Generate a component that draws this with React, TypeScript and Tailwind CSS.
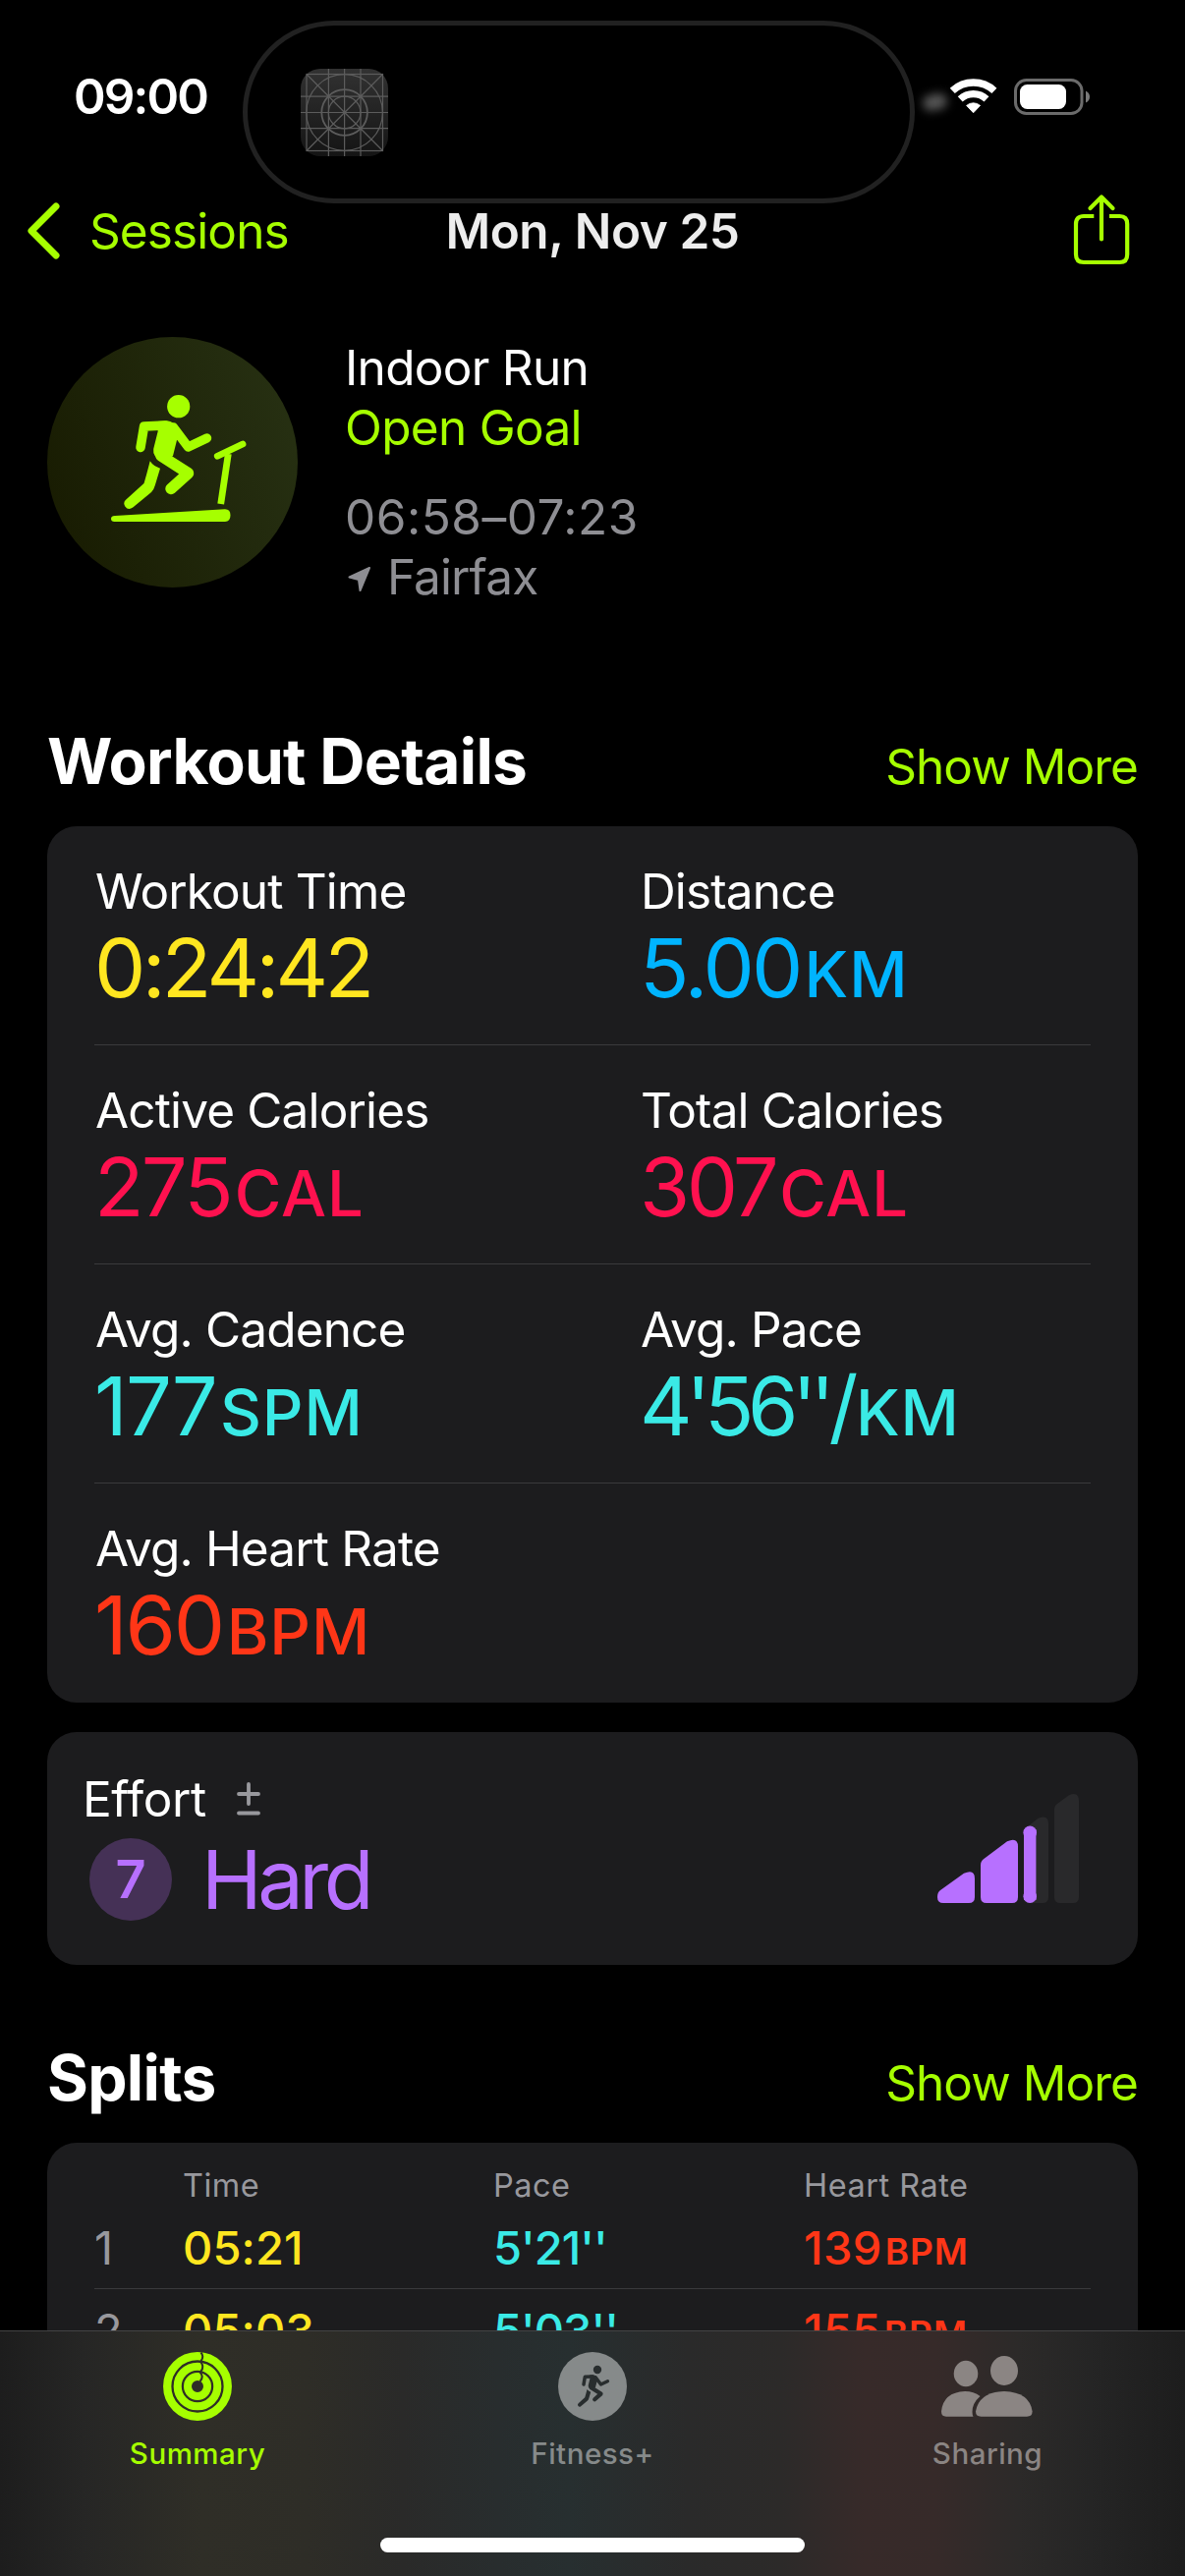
import React from 'react';

const workoutDetails = [
  [
    { label: 'Workout Time', value: '0:24:42', unit: '', color: 'text-[#ffe620]', tracking: 'tracking-[-3.7px]' },
    { label: 'Distance', value: '5.00', unit: 'KM', color: 'text-[#00b4ff]', tracking: 'tracking-[-2.8px]' },
  ],
  [
    { label: 'Active Calories', value: '275', unit: 'CAL', color: 'text-[#ff114f]', tracking: 'tracking-[-2.8px]' },
    { label: 'Total Calories', value: '307', unit: 'CAL', color: 'text-[#ff114f]', tracking: 'tracking-[-3.6px]' },
  ],
  [
    { label: 'Avg. Cadence', value: '177', unit: 'SPM', color: 'text-[#3aeae6]', tracking: 'tracking-[-1.8px]' },
    { label: 'Avg. Pace', value: "4'56''/", unit: 'KM', color: 'text-[#3aeae6]', tracking: 'tracking-[-6.3px]' },
  ],
  [{ label: 'Avg. Heart Rate', value: '160', unit: 'BPM', color: 'text-[#ff3617]', tracking: 'tracking-[-2.3px]' }],
];

const splits = [
  { id: 1, time: '05:21', pace: "5'21''", heartRate: '139' },
  { id: 2, time: '05:03', pace: "5'03''", heartRate: '155' },
];

const Runner = () => (
  <g fill="none" stroke="currentColor" strokeLinecap="round" strokeLinejoin="round">
    <circle cx="133.7" cy="70.7" r="11.6" fill="currentColor" stroke="none" />
    <path d="M95 112.5 98.6 91 120 90" strokeWidth="9.5" />
    <path d="M112 86 L122 85.3 Q129 86 132.5 93 L137 103 L132 105 L128 121 L117 127 Q107 122 108.2 114 L112.7 96 Z" fill="currentColor" stroke="none" />
    <path d="M128.5 92 143.5 112 162.5 103" strokeWidth="9.5" />
    <path d="M116 121 143.5 138.7 126 154.5" strokeWidth="11.5" />
    <path d="M104.7 126.3 Q108 131.5 115 133.7 L109.8 151 Q108.6 155.5 106 158 L87.2 173.6 Q82.5 177 79.3 172.5 Q76.8 168.5 80.3 165.5 L98.5 149 Q101 141 104.7 126.3 Z" fill="currentColor" stroke="none" />
  </g>
);

const StatusBar = () => (
  <div className="flex h-[176px] items-center pt-5 pl-[75px] pr-[97px] text-white">
    <span className="text-[49.5px] leading-[60px] font-semibold tracking-[-1.9px]">09:00</span>
    <div className="ml-auto flex items-center">
      <div className="mr-[3px] mt-3 h-4 w-[25px] -rotate-12 rounded-full bg-[#555] blur-[5px]" />
      <svg className="w-[48px] h-[36px]" viewBox="0 0 48 36" fill="none" stroke="white">
        <path d="M2.3 12.4a31.3 31.3 0 0 1 42.6 0" strokeWidth="7.4" />
        <path d="M10.2 20.9a19.7 19.7 0 0 1 26.8 0" strokeWidth="7.2" />
        <path d="M16.6 27.4a10.7 10.7 0 0 1 14 0L23.6 34.8Z" fill="white" strokeWidth="0.8" strokeLinejoin="round" />
      </svg>
      <svg className="ml-[17px] w-[77px] h-[37px]" viewBox="0 0 77 37">
        <rect x="1.5" y="1.5" width="67.5" height="34" rx="11" fill="none" stroke="#6b6b6b" strokeWidth="3" />
        <rect x="6" y="6" width="47" height="25" rx="7.5" fill="white" />
        <path d="M73 12.5Q77 14.5 77 18.5T73 24.5Z" fill="#7a7a7a" />
      </svg>
    </div>
  </div>
);

const DynamicIsland = () => (
  <div className="absolute top-[21px] left-[247px] flex h-[186px] w-[684px] items-center rounded-[93px] border-[5px] border-[#212121] bg-black pl-[54px]">
    <svg className="w-[89px] h-[89px]" viewBox="0 0 89 89" fill="none" stroke="#5c5c5c" strokeWidth="1.2">
      <defs>
        <linearGradient id="tile" x1="0" y1="0" x2="0" y2="1">
          <stop offset="0" stopColor="#323232" />
          <stop offset="1" stopColor="#141414" />
        </linearGradient>
      </defs>
      <rect width="89" height="89" rx="20" fill="url(#tile)" stroke="none" />
      <rect x="6" y="5.5" width="77.5" height="78" />
      <path d="M28.4 0V89M44.6 0V89M61 0V89M0 28.2H89M0 44.5H89M0 60.7H89M6 5.5 83.5 83.5M83.5 5.5 6 83.5" />
      <circle cx="44.6" cy="44.5" r="38.8" />
      <circle cx="44.6" cy="44.5" r="23.3" strokeWidth="1.8" />
      <circle cx="44.6" cy="44.5" r="16.3" />
    </svg>
  </div>
);

const NavBar = () => (
  <div className="grid h-[118px] grid-cols-3 items-center pl-[27px] pr-[55px] text-[49.5px] leading-[60px]">
    <div className="flex items-center text-[#a6ff00]">
      <svg className="w-[34px] h-[58px]" viewBox="0 0 34 58" fill="none" stroke="currentColor" strokeWidth="7" strokeLinecap="round" strokeLinejoin="round">
        <path d="M30 4 5 29 30 54" />
      </svg>
      <span className="ml-[30px] tracking-[-0.9px]">Sessions</span>
    </div>
    <h1 className="pl-7 text-center font-semibold whitespace-nowrap text-[#ededed] tracking-[-0.4px]">Mon, Nov 25</h1>
    <svg className="ml-auto mb-1 w-[60px] h-[75px] text-[#a6ff00]" viewBox="0 0 60 75" fill="none" stroke="currentColor" strokeWidth="4.2" strokeLinecap="round" strokeLinejoin="round">
      <path d="M22.3 24H12Q4 24 4 32V63Q4 71 12 71H48.5Q56.2 71 56.2 63V32Q56.2 24 48.5 24H38" strokeLinecap="butt" />
      <path d="M30 47.5V4.5M18.5 16 30 4.5 41.5 16" />
    </svg>
  </div>
);

const SectionHeader = ({ title }: { title: string }) => (
  <div className="flex h-20 items-baseline justify-between mb-[26px] leading-[80px]">
    <h2 className="text-[64px] font-bold text-white tracking-[-0.7px]">{title}</h2>
    <button className="text-[49.5px] text-[#a6ff00] tracking-[-0.95px]">Show More</button>
  </div>
);

const EffortBars = () => (
  <svg className="w-[144px] h-[111px] mt-[63px] mr-[60px]" viewBox="0 0 144 111">
    <path d="M3 98 27 80.8Q38 76 38 86V105Q38 111 32 111H6Q0 111 0 105Q0 100 3 98Z" fill="#b770ff" />
    <path d="M47 66.3 71 48.2Q82 43.5 82 53.5V105Q82 111 76 111H50Q44 111 44 105V72.5Q44 68.5 47 66.3Z" fill="#b770ff" />
    <path d="M91 34 102.5 24.8Q113 20.5 113 30V105Q113 111 107 111H94Q88 111 88 105V39Q88 36.2 91 34Z" fill="#29292b" />
    <path d="M122 10 133.5 1.5Q144 -3 144 7V105Q144 111 138 111H125Q119 111 119 105V16Q119 12.2 122 10Z" fill="#29292b" />
    <rect x="88" y="36" width="12.4" height="72" fill="#b770ff" />
    <circle cx="94.2" cy="39.4" r="6.8" fill="#b770ff" />
    <circle cx="94.2" cy="104.2" r="6.8" fill="#b770ff" />
  </svg>
);

const TabBar = () => (
  <div className="absolute inset-x-0 bottom-0 h-[250px] border-t border-[#434344] bg-[linear-gradient(90deg,#1d1d1d_0%,#262625_7%,#2f2e27_17%,#2e2d27_26%,#2a2a29_34%,#282d2e_42%,#272f30_48%,#2a2a2a_58%,#2c2a29_66%,#372a29_73%,#362a29_79%,#2c2a29_86%,#252525_92%,#1d1d1d_100%)]">
    <div className="grid grid-cols-3 pt-[21px] text-[29.5px] font-medium leading-10 tracking-[0.5px]">
      <div className="flex flex-col items-center gap-[13px] text-[#a6ff00]">
        <svg className="w-[70px] h-[70px]" viewBox="0 0 70 70" fill="none" stroke="currentColor">
          <circle cx="35" cy="35" r="30.8" strokeWidth="8.3" />
          <circle cx="35" cy="35" r="20.3" strokeWidth="8.1" />
          <circle cx="35" cy="35" r="10" strokeWidth="8" />
          <g stroke="#2f2e27" strokeWidth="2">
            <path d="M38.5 0.5Q42 4.5 38.5 9.2" />
            <path d="M38.5 10.5Q42 15 38.5 19.7" />
            <path d="M37.5 20.5Q42 25 37.5 30" />
          </g>
        </svg>
        <span>Summary</span>
      </div>
      <div className="flex flex-col items-center gap-[13px] text-[#868a8a]">
        <svg className="w-[70px] h-[70px]" viewBox="0 0 70 70">
          <circle cx="35" cy="35" r="35" fill="currentColor" />
          <g className="text-[#282d2e]" transform="translate(-8.4 -7.6) scale(.362)">
            <Runner />
          </g>
        </svg>
        <span>Fitness+</span>
      </div>
      <div className="flex flex-col items-center gap-[13px] text-[#8b8583]">
        <svg className="w-[94px] h-[70px]" viewBox="0 -4 94 70" fill="currentColor">
          <ellipse cx="25" cy="18" rx="12.3" ry="13.2" />
          <ellipse cx="64" cy="15" rx="14" ry="15" />
          <path d="M24 36Q33 36 39.5 41Q31.5 48 31.5 57Q31.5 60 32.5 61.7H5Q0 61.7 0 56.5Q2 37 24 36Z" />
          <path d="M64 36Q90 37 92.6 56.5Q92.6 61.7 87 61.7H40.5Q35 61.7 35 56.5Q38 37 64 36Z" />
        </svg>
        <span>Sharing</span>
      </div>
    </div>
    <div className="mx-auto mt-[66px] h-[15px] w-[432px] rounded-full bg-white" />
  </div>
);

const App = () => {
  return (
    <div className="relative h-[2622px] w-[1206px] overflow-hidden bg-black font-['Inter','Liberation_Sans',sans-serif]">
      <StatusBar />
      <DynamicIsland />
      <NavBar />

      {/* Workout summary */}
      <div className="mt-[49px] flex h-[274px] pl-12">
        <div className="h-[255px] w-[255px] rounded-full bg-[linear-gradient(70deg,#171a00,#283214)] text-[#a6ff00]">
          <svg className="w-[255px] h-[255px]" viewBox="0 0 255 255">
            <Runner />
            <path d="M69 182 181 175.3Q186.5 175.3 186.5 181.5T181 188H68.5Q65 188 65 185T69 182Z" fill="currentColor" />
            <g fill="none" stroke="currentColor" strokeWidth="6.8">
              <path d="M176.7 170 184.3 119" />
              <path d="M173.3 121.3 199 109" strokeLinecap="round" />
            </g>
          </svg>
        </div>
        <div className="ml-[48px] mt-px text-[49.5px] leading-[61px] tracking-[-0.7px]">
          <p className="text-white">Indoor Run</p>
          <p className="text-[#a6ff00]">Open Goal</p>
          <p className="mt-[30px] text-[#8e8e93] tracking-[0.5px]">06:58–07:23</p>
          <p className="flex items-center text-[#8e8e93] tracking-[-0.9px]">
            <svg className="mt-1 ml-[3px] mr-[16px] w-6 h-[27px]" viewBox="0 0 24 27" fill="currentColor" stroke="currentColor" strokeWidth="2" strokeLinejoin="round">
              <path d="M22 2 1.5 11.5 11 14 12.5 25Z" />
            </svg>
            Fairfax
          </p>
        </div>
      </div>

      {/* Workout details */}
      <div className="mt-[118px] px-12">
        <SectionHeader title="Workout Details" />
        <div className="rounded-[30px] bg-[#1c1c1e] px-12">
          {workoutDetails.map((row, i) => (
            <div key={i} className="grid h-[223px] grid-cols-[555px_1fr] border-b border-[#3a3a3c] pt-9 last:border-b-0">
              {row.map((item) => (
                <div key={item.label} className="whitespace-nowrap">
                  <p className="pl-px text-[49.5px] leading-[60px] text-white tracking-[-0.85px]">{item.label}</p>
                  <p className={`text-[83px] leading-24 ${item.tracking} ${item.color}`}>
                    {item.value}
                    <span className="ml-[4px] text-[65px] font-medium tracking-[0.9px]">{item.unit}</span>
                  </p>
                </div>
              ))}
            </div>
          ))}
        </div>
      </div>

      {/* Effort */}
      <div className="mx-12 mt-[30px] flex h-[237px] justify-between rounded-[30px] bg-[#1c1c1e] pl-[36px]">
        <div className="pt-[38px]">
          <div className="flex items-center text-[49.5px] leading-[60px] text-white tracking-[-0.4px]">
            Effort
            <svg className="ml-[31px] w-6 h-[34px] text-[#98989d]" viewBox="0 0 24 34" stroke="currentColor" strokeWidth="3.8" strokeLinecap="round">
              <path d="M2 12H22M12 2V22M2 31.5H22" />
            </svg>
          </div>
          <div className="mt-[10px] flex items-center text-[#b770ff]">
            <div className="ml-[7px] flex h-[84px] w-[84px] items-center justify-center rounded-full bg-[#453156] text-[54px] leading-none font-semibold">7</div>
            <span className="ml-[30px] text-[83px] leading-[84px] tracking-[-4.5px]">Hard</span>
          </div>
        </div>
        <EffortBars />
      </div>

      {/* Splits */}
      <div className="mt-[75px] px-12">
        <SectionHeader title="Splits" />
        <div className="rounded-[30px] bg-[#1c1c1e] px-12">
          <div className="grid h-[65px] grid-cols-[90px_316px_316px_1fr] pt-[22px] text-[32.5px] leading-[43px] tracking-[0.5px] text-[#98989d]">
            <span />
            <span>Time</span>
            <span>Pace</span>
            <span>Heart Rate</span>
          </div>
          {splits.map((split) => (
            <div key={split.id} className="grid h-[84px] grid-cols-[90px_316px_316px_1fr] items-center border-b border-[#3a3a3c] text-[47px] leading-[60px]">
              <span className="text-[#98989d]">{split.id}</span>
              <span className="font-medium text-[#ffe620] tracking-[0.1px]">{split.time}</span>
              <span className="font-medium text-[#3aeae6] tracking-[-1px]">{split.pace}</span>
              <span className="font-medium text-[#ff3617] tracking-[0.4px]">
                {split.heartRate}
                <span className="ml-[3px] text-[37px] leading-none font-semibold tracking-[0.9px]">BPM</span>
              </span>
            </div>
          ))}
        </div>
      </div>

      <TabBar />
    </div>
  );
};

export default App;
